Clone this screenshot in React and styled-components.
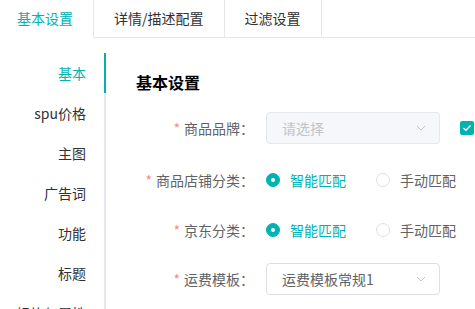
import React from "react";
import styled, { createGlobalStyle } from "styled-components";

const TEAL = "#00b3b3";

const Global = createGlobalStyle`
  html, body { margin: 0; padding: 0; background: #fff; overflow: hidden; }
  body { font-family: "Noto Sans CJK SC", "Noto Sans", sans-serif; color: #303133; }
  * { box-sizing: border-box; }
`;

const Page = styled.div`
  width: 475px;
  height: 309px;
  overflow: hidden;
  background: #fff;
`;

const TabBar = styled.div`
  display: flex;
  height: 38px;
`;

const Tab = styled.div`
  height: 38px;
  line-height: 36px;
  padding: 0 20px;
  font-size: 14px;
  color: ${(p) => (p.$active ? TEAL : "#303133")};
  border-right: 1px solid #e4e7ed;
  border-bottom: 1px solid ${(p) => (p.$active ? "#fff" : "#e4e7ed")};
  flex: none;
  &:first-child {
    padding-left: 17px;
    width: 94px;
  }
`;

const TabFill = styled.div`
  flex: 1;
  border-bottom: 1px solid #e4e7ed;
`;

const Body = styled.div`
  display: flex;
  padding-top: 15px;
`;

const Nav = styled.div`
  width: 106px;
  flex: none;
  border-right: 2px solid #e4e7ed;
  height: 300px;
`;

const NavItem = styled.div`
  position: relative;
  height: 40px;
  line-height: 40px;
  text-align: right;
  padding-right: 18px;
  font-size: 14px;
  color: ${(p) => (p.$active ? TEAL : "#303133")};
  &::after {
    content: "";
    display: ${(p) => (p.$active ? "block" : "none")};
    position: absolute;
    right: -2px;
    top: 0;
    width: 2px;
    height: 40px;
    background: ${TEAL};
  }
`;

const Content = styled.div`
  padding-left: 30px;
  flex: none;
  width: 500px;
`;

const Heading = styled.div`
  font-size: 16px;
  font-weight: bold;
  color: #000;
  line-height: 24px;
  margin-top: 17px;
  margin-bottom: 18px;
`;

const Row = styled.div`
  display: flex;
  align-items: center;
  height: 32px;
  margin-bottom: ${(p) => p.$mb}px;
`;

const Label = styled.div`
  width: 130px;
  flex: none;
  text-align: right;
  padding-right: 12px;
  font-size: 14px;
  color: #606266;
  white-space: nowrap;
`;

const Star = styled.span`
  color: #f78989;
  margin-right: 4px;
`;

const Select = styled.div`
  width: 174px;
  height: 32px;
  border: 1px solid ${(p) => (p.$disabled ? "#e4e7ed" : "#dcdfe6")};
  background: ${(p) => (p.$disabled ? "#f5f7fa" : "#fff")};
  border-radius: 4px;
  display: flex;
  align-items: center;
  justify-content: space-between;
  padding: 0 13px 0 15px;
  font-size: 14px;
  color: ${(p) => (p.$disabled ? "#c0c4cc" : "#606266")};
  flex: none;
`;

const Check = styled.div`
  width: 14px;
  height: 14px;
  border-radius: 2px;
  background: ${TEAL};
  margin-left: 20px;
  display: flex;
  align-items: center;
  justify-content: center;
  flex: none;
`;

const RadioGroup = styled.div`
  display: flex;
  align-items: center;
`;

const Radio = styled.label`
  display: flex;
  align-items: center;
  margin-right: 30px;
  font-size: 14px;
  color: ${(p) => (p.$checked ? TEAL : "#606266")};
`;

const Dot = styled.span`
  width: 14px;
  height: 14px;
  border-radius: 50%;
  border: 1px solid ${(p) => (p.$checked ? TEAL : "#dcdfe6")};
  background: ${(p) => (p.$checked ? TEAL : "#fff")};
  margin-right: 10px;
  display: flex;
  align-items: center;
  justify-content: center;
  &::after {
    content: "";
    width: 4px;
    height: 4px;
    border-radius: 50%;
    background: #fff;
    display: ${(p) => (p.$checked ? "block" : "none")};
  }
`;

const Chevron = () => (
  <svg width="10" height="6" viewBox="0 0 10 6">
    <path d="M1 1 L5 5 L9 1" fill="none" stroke="#c0c4cc" strokeWidth="1" />
  </svg>
);

const CheckMark = () => (
  <svg width="10" height="8" viewBox="0 0 10 8">
    <path d="M1.5 4 L4 6.3 L8.5 1.5" fill="none" stroke="#fff" strokeWidth="1.4" />
  </svg>
);

const navItems = ["基本", "spu价格", "主图", "广告词", "功能", "标题", "规格与属性"];

const RadioPair = () => (
  <RadioGroup>
    <Radio $checked>
      <Dot $checked />
      智能匹配
    </Radio>
    <Radio>
      <Dot />
      手动匹配
    </Radio>
  </RadioGroup>
);

export default function App() {
  return (
    <Page>
      <Global />
      <TabBar>
        <Tab $active>基本设置</Tab>
        <Tab>详情/描述配置</Tab>
        <Tab>过滤设置</Tab>
        <TabFill />
      </TabBar>
      <Body>
        <Nav>
          {navItems.map((n, i) => (
            <NavItem key={n} $active={i === 0}>
              {n}
            </NavItem>
          ))}
        </Nav>
        <Content>
          <Heading>基本设置</Heading>
          <Row $mb={20}>
            <Label>
              <Star>*</Star>商品品牌：
            </Label>
            <Select $disabled>
              请选择
              <Chevron />
            </Select>
            <Check>
              <CheckMark />
            </Check>
          </Row>
          <Row $mb={18}>
            <Label>
              <Star>*</Star>商品店铺分类：
            </Label>
            <RadioPair />
          </Row>
          <Row $mb={17}>
            <Label>
              <Star>*</Star>京东分类：
            </Label>
            <RadioPair />
          </Row>
          <Row $mb={17}>
            <Label>
              <Star>*</Star>运费模板：
            </Label>
            <Select>
              运费模板常规1
              <Chevron />
            </Select>
          </Row>
        </Content>
      </Body>
    </Page>
  );
}
